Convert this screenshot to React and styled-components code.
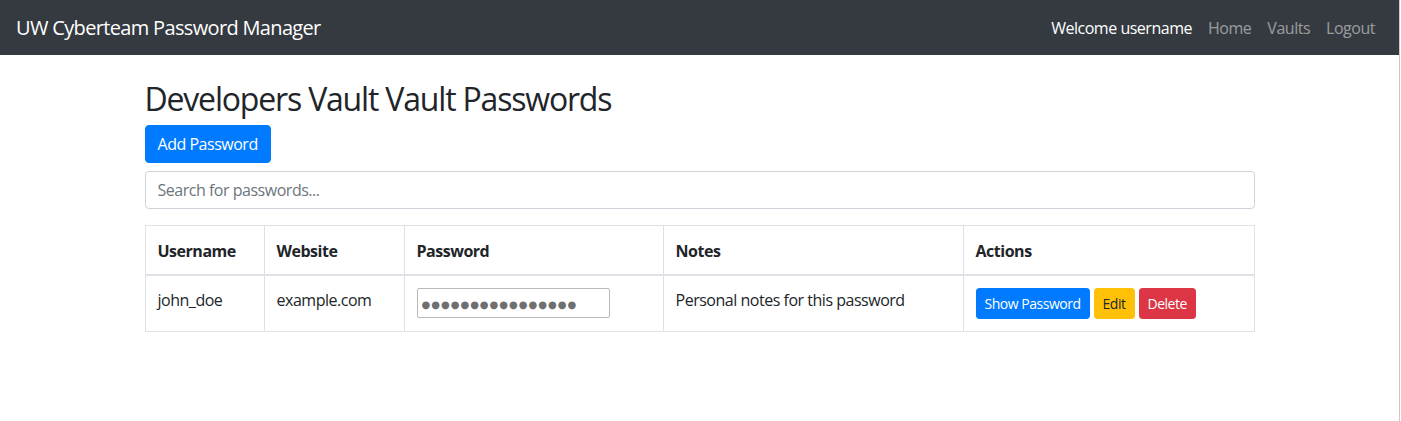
import React from "react";
import styled, { createGlobalStyle } from "styled-components";

const Global = createGlobalStyle`
  html, body { margin: 0; padding: 0; }
  body {
    font-family: "Segoe UI", "Open Sans", sans-serif;
    font-size: 16px;
    line-height: 1.5;
    letter-spacing: -0.03em;
    color: #212529;
    background: #fff;
    width: 1400px;
    min-height: 421px;
    border-right: 1px solid #c9c9c9;
  }
  * { box-sizing: border-box; }
`;

const Navbar = styled.nav`
  display: flex;
  align-items: center;
  justify-content: space-between;
  height: 55px;
  padding: 1px 16px 0;
  background: #343a40;
`;

const Brand = styled.a`
  font-size: 20px;
  letter-spacing: -0.033em;
  color: #fff;
  text-decoration: none;
  line-height: 30px;
`;

const NavList = styled.div`
  display: flex;
  align-items: center;
`;

const NavItem = styled.a`
  padding: 8px;
  color: ${(p) => (p.$active ? "#fff" : "rgba(255,255,255,0.5)")};
  text-decoration: none;
`;

const Container = styled.main`
  width: 1140px;
  margin: 0 auto;
  padding: 24px 15px 0;
`;

const Title = styled.h2`
  margin: 0 0 8px;
  padding-top: 2px;
  height: 38px;
  font-size: 32px;
  font-weight: 400;
  line-height: 36px;
  letter-spacing: -0.037em;
`;

const Button = styled.button`
  display: inline-block;
  font-family: inherit;
  letter-spacing: inherit;
  border: 1px solid ${(p) => p.$bg};
  background: ${(p) => p.$bg};
  color: ${(p) => p.$fg || "#fff"};
  border-radius: ${(p) => (p.$sm ? "3.2px" : "4px")};
  font-size: ${(p) => (p.$sm ? "14px" : "16px")};
  line-height: 1.5;
  padding: ${(p) => (p.$sm ? "4px 8px" : "6px 12px")};
  cursor: pointer;
`;

const AddButton = styled(Button)`
  margin-bottom: 8px;
`;

const Search = styled.input`
  display: block;
  width: 100%;
  height: 38px;
  padding: 6px 12px;
  font-family: inherit;
  letter-spacing: inherit;
  font-size: 16px;
  line-height: 1.5;
  color: #495057;
  border: 1px solid #ced4da;
  border-radius: 4px;
  margin-bottom: 16px;
  &::placeholder { color: #6c757d; }
`;

const Table = styled.table`
  width: 100%;
  border-collapse: collapse;
  color: #212529;
`;

const Th = styled.th`
  text-align: left;
  font-weight: 700;
  padding: 13px 12px 11px;
  border: 1px solid #dee2e6;
  border-bottom-width: 2px;
  vertical-align: bottom;
  width: ${(p) => p.$w};
`;

const Td = styled.td`
  padding: 12px;
  border: 1px solid #dee2e6;
  vertical-align: top;
`;

const PwInput = styled.input`
  display: block;
  width: 193px;
  height: 30px;
  padding: 3px 4px 0;
  font-family: "DejaVu Sans", sans-serif;
  font-size: 10px;
  letter-spacing: 1px;
  color: #6f6f6f;
  border: 1px solid #b8b8b8;
  border-radius: 2px;
`;

const Actions = styled.div`
  display: flex;
  gap: 4px;
`;

export default function App() {
  return (
    <>
      <Global />
      <Navbar>
        <Brand href="#">UW Cyberteam Password Manager</Brand>
        <NavList>
          <NavItem $active>Welcome username</NavItem>
          <NavItem href="#">Home</NavItem>
          <NavItem href="#">Vaults</NavItem>
          <NavItem href="#">Logout</NavItem>
        </NavList>
      </Navbar>
      <Container>
        <Title>Developers Vault Vault Passwords</Title>
        <AddButton $bg="#007bff">Add Password</AddButton>
        <Search placeholder="Search for passwords..." />
        <Table>
          <thead>
            <tr>
              <Th $w="119px">Username</Th>
              <Th $w="140px">Website</Th>
              <Th $w="259px">Password</Th>
              <Th $w="300px">Notes</Th>
              <Th>Actions</Th>
            </tr>
          </thead>
          <tbody>
            <tr>
              <Td>john_doe</Td>
              <Td>example.com</Td>
              <Td>
                <PwInput type="text" readOnly value="●●●●●●●●●●●●●●●●" aria-label="password" />
              </Td>
              <Td>Personal notes for this password</Td>
              <Td>
                <Actions>
                  <Button $sm $bg="#007bff">Show Password</Button>
                  <Button $sm $bg="#ffc107" $fg="#212529">Edit</Button>
                  <Button $sm $bg="#dc3545">Delete</Button>
                </Actions>
              </Td>
            </tr>
          </tbody>
        </Table>
      </Container>
    </>
  );
}
